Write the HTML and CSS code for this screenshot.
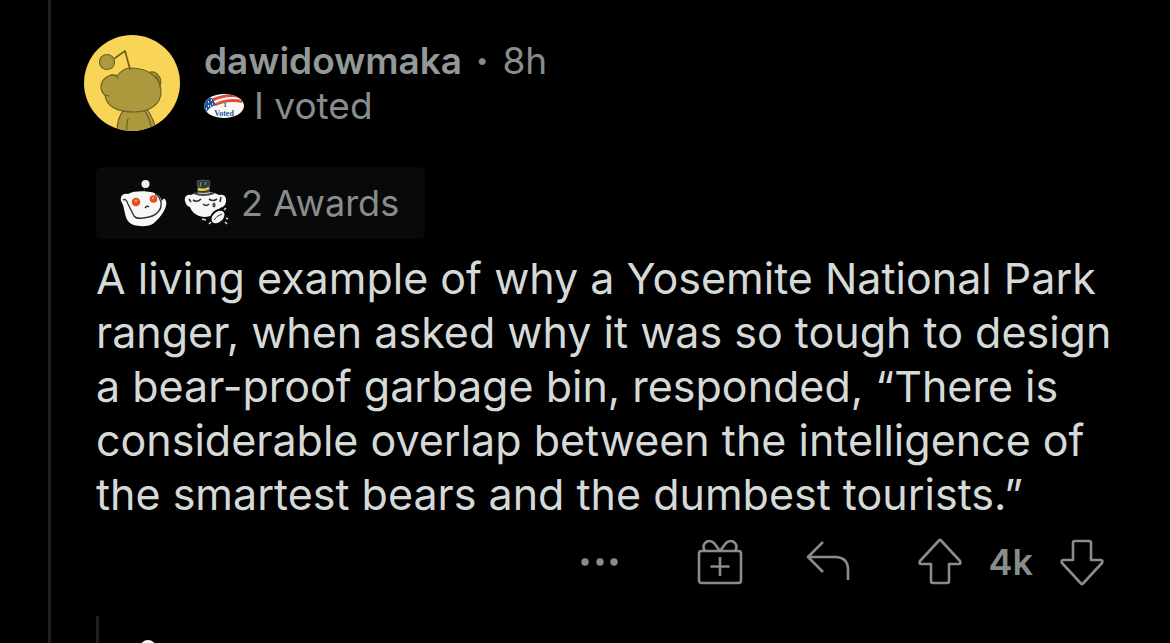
FILE: index.html
```html
<!DOCTYPE html>
<html lang="en">
<head>
<meta charset="utf-8">
<meta name="viewport" content="width=device-width, initial-scale=1">
<title>Comment thread</title>
<link rel="stylesheet" href="styles.css">
</head>
<body>
<main class="thread">
  <article class="comment">
    <header class="author">
      <svg class="avatar" viewBox="0 0 96 96" aria-hidden="true">
        <defs><clipPath id="disc"><circle cx="48" cy="48" r="48"/></clipPath></defs>
        <circle cx="48" cy="48" r="48" fill="#f8d557"/>
        <g clip-path="url(#disc)" fill="#ad993d" stroke="#6e6127" stroke-width="1.2" stroke-linecap="round" stroke-linejoin="round">
          <path d="M39 76C34 82 33 89 33 98H73C71 88 67 80 63 74Z"/>
          <path d="M44 84Q42 90 43 98M61 76Q67 86 68 98" fill="none"/>
          <path d="M64 38C69 35 74 38 76 43Q78 48 75 52Z"/>
          <path d="M33 41C28 38 18 42 17 51C17 57 19 59 21 60C22 71 33 77 50 77C66 77 77 69 77 57C77 43 65 33 47 33C41 33 36 37 33 41Z"/>
          <path d="M27 40Q32 40 34 43M21 60L25 61M72 41Q76 46 76 52" fill="none"/>
          <path d="M31 23L41 16L46 34" fill="none" stroke-width="1.8"/>
          <circle cx="23" cy="27" r="7.5"/>
        </g>
      </svg>
      <div class="identity">
        <div class="byline"><a class="name" href="#user">dawidowmaka</a><span>•</span><time>8h</time></div>
        <div class="flair">
          <svg class="sticker" viewBox="0 0 40 24" aria-hidden="true">
            <defs><clipPath id="oval"><ellipse cx="20" cy="12" rx="20" ry="12"/></clipPath></defs>
            <g clip-path="url(#oval)">
              <path d="M0 0H40V24H0Z" fill="#fbfbf4"/>
              <path d="M7 5Q19-1 33 1L36 4Q22 1 8 8ZM10 10Q23 3 38 6V9Q24 6 12 12Z" fill="#e34c3b"/>
              <path d="M0 3L8 4L12 11Q5 13 2 19L0 18Z" fill="#27549b"/>
              <path d="M4 8h1M7 6h1M8 10h1M4 12h1M2 15h1M6 12h1" stroke="#fff" stroke-width="1.3"/>
            </g>
            <text class="sticker-text sticker-top" x="21" y="13">I</text>
            <text class="sticker-text" x="20" y="22">Voted</text>
          </svg>
          <span>I voted</span>
        </div>
      </div>
    </header>
    <button class="awards" type="button">
      <svg class="award" viewBox="0 0 48 48" aria-hidden="true">
        <path d="M26 13Q26 9 28 6" fill="none" stroke="#34383a"/>
        <circle cx="27.500" cy="5" r="4" fill="#eef0ef"/>
        <path d="M10 15C5 14 2 17 3 22L5 26C7 33 7 38 10 42C14 48 30 49 36 44C43 38 50 28 48 22Q46 17 44 22C43 19 41 16 38 15C34 12 17 11 10 15Z" fill="#f7f8f6"/>
        <path d="M5 21Q8 19 10 25L16 37Q18 40 25 39Q36 38 40 33Q44 29 43 22M37 15Q41 16 43 23" fill="none" stroke="#303335" stroke-width="1.4"/>
        <circle cx="18" cy="23" r="4.300" fill="#e94a23"/><circle cx="35.500" cy="20" r="3.800" fill="#e94a23"/>
        <circle cx="18" cy="22" r="1.400" fill="#ff9662"/><circle cx="35" cy="19" r="1.200" fill="#ff9662"/>
        <path d="M27 29Q29 26 31 28" fill="none" stroke="#303335" stroke-width="1.400"/>
      </svg>
      <svg class="award" viewBox="0 0 48 48" aria-hidden="true">
        <path d="M7 16C3 15 0 18 1 22Q2 27 6 28C10 40 29 42 36 29Q43 27 42 20Q41 15 35 16C29 12 13 12 7 16Z" fill="#f7f8f6"/>
        <path d="M13 2Q19 0 26 2L25 13Q19 15 14 13Z" fill="#303b40" stroke="#59656a" stroke-width=".7"/>
        <path d="M10 14Q19 18 30 14" fill="none" stroke="#3d484c" stroke-width="2"/>
        <path d="M14 10Q20 12 25 9" fill="none" stroke="#f0cf31" stroke-width="2.4"/>
        <path d="M17 3L16 8M22 3L21 6" fill="none" stroke="#849095"/>
        <path d="M9 21Q13 24 17 20M25 20Q29 23 33 20M19 25Q22 28 25 25M5 20L7 23M37 18L36 23" fill="none" stroke="#303335" stroke-width="1.600"/>
        <ellipse cx="30" cy="26" rx="1.600" ry="2.600" fill="#485044"/>
        <ellipse cx="34" cy="38" rx="8.500" ry="6" transform="rotate(-42 34 38)" fill="#f7f8f6" stroke="#090a0a" stroke-width="2"/>
        <path d="M30 41Q32 37 38 35" fill="none" stroke="#303335"/>
        <path d="M18 40L22 41M25 45L27 43M40 31L42 29M42 39L44 40M41 43L43 45" fill="none" stroke="#d8d3bd" stroke-width="1.600"/>
      </svg>
      <span>2 Awards</span>
    </button>
    <p class="body">A living example of why a Yosemite National Park ranger, when asked why it was so tough to design a bear-proof garbage bin, responded, “There is considerable overlap between the intelligence of the smartest bears and the dumbest tourists.”</p>
    <footer class="actions">
      <button class="action" type="button" aria-label="More options">
        <svg width="40" height="48" viewBox="0 0 40 48" fill="currentColor"><circle cx="5" cy="24" r="3.700"/><circle cx="20" cy="24" r="3.700"/><circle cx="34" cy="24" r="3.700"/></svg>
      </button>
      <button class="action gift" type="button" aria-label="Give award">
        <svg class="line-icon" width="46" height="48" viewBox="0 0 46 48"><rect x="2" y="13" width="42" height="32" rx="2.500"/><path d="M23 19V38M13.500 28.500H32.500M23 13L17 5Q12 1 8 5Q5 9 8 13M23 13L29 5Q34 1 38 5Q41 9 38 13"/></svg>
      </button>
      <button class="action reply" type="button" aria-label="Reply">
        <svg class="line-icon" width="46" height="48" viewBox="0 0 46 48"><path d="M18 4L3 19L18 34M3 19H30Q43 19 43 32V42"/></svg>
      </button>
      <div class="votes">
        <button class="action" type="button" aria-label="Upvote">
          <svg class="line-icon" width="46" height="48" viewBox="0 0 46 48"><path d="M22 2.500Q23 1.500 24 2.500L43 23Q44 26 42 26H32V43Q32 45 30 45H16Q14 45 14 43V26H4Q2 26 3 23Z"/></svg>
        </button>
        <span class="score">4k</span>
        <button class="action" type="button" aria-label="Downvote">
          <svg class="line-icon" width="46" height="48" viewBox="0 0 46 48"><path d="M22 45.500Q23 46.500 24 45.500L43 25Q44 22 42 22H32V5Q32 3 30 3H16Q14 3 14 5V22H4Q2 22 3 25Z"/></svg>
        </button>
      </div>
    </footer>
  </article>
  <section class="replies" aria-label="Replies">
    <svg class="reply-avatar" viewBox="0 0 16 28" aria-hidden="true"><circle cx="8" cy="8" r="8" fill="#f7f7f7"/></svg>
  </section>
</main>
</body>
</html>
```
FILE: styles.css
```css
* { box-sizing: border-box; }

body {
  margin: 0;
  background: #000;
  color: #878d8c;
  font-family: Inter, "Liberation Sans", sans-serif;
}

.thread {
  height: 100vh;
  margin-left: 48px;
  border-left: 3px solid #202020;
  overflow: hidden;
}

.comment { padding: 35px 48px 0 45px; }

.author {
  display: flex;
  gap: 24px;
  margin-left: -12px;
}

.avatar { width: 96px; height: 96px; flex: none; }

.identity { padding-top: 3px; }

.byline {
  display: flex;
  align-items: center;
  gap: 14px;
  font-size: 37px;
  line-height: 45px;
}

.byline span { font-size: 22px; }

.name {
  color: #929998;
  font-weight: 600;
  text-decoration: none;
}

.flair {
  display: flex;
  align-items: center;
  gap: 10px;
  font-size: 37px;
  line-height: 45px;
}

.sticker { width: 40px; height: 24px; }

.sticker-text {
  fill: #27549b;
  font: bold 8px "Liberation Serif", serif;
  text-anchor: middle;
}

.sticker-top { font-size: 7px; }

button {
  padding: 0;
  border: 0;
  background: none;
  color: inherit;
  font: inherit;
  cursor: pointer;
}

.awards {
  display: flex;
  align-items: center;
  gap: 18px;
  height: 72px;
  margin-top: 36px;
  padding: 0 26px 0 22px;
  border-radius: 6px;
  background: #09090a;
  font-size: 36px;
}

.award { width: 48px; height: 48px; overflow: visible; }

.awards span { margin-left: -9px; }

.body {
  margin: 12px 0 0;
  color: #d5dad8;
  font-size: 43px;
  line-height: 54px;
}

.actions {
  display: flex;
  align-items: center;
  justify-content: flex-end;
  height: 48px;
  margin-top: 17px;
  padding-right: 17px;
}

.action { display: flex; }

.line-icon {
  fill: none;
  stroke: currentColor;
  stroke-width: 2.6px;
  stroke-linejoin: round;
}

.gift { margin-left: 77px; }
.reply { margin-left: 62px; }

.votes {
  display: flex;
  align-items: center;
  gap: 26px;
  margin-left: 66px;
}

.score { font-size: 36px; font-weight: 600; }

.replies {
  margin: 30px 0 0 45px;
  padding: 24px 0 0 41px;
  border-left: 3px solid #202020;
}

.reply-avatar { display: block; width: 16px; height: 28px; }
```
